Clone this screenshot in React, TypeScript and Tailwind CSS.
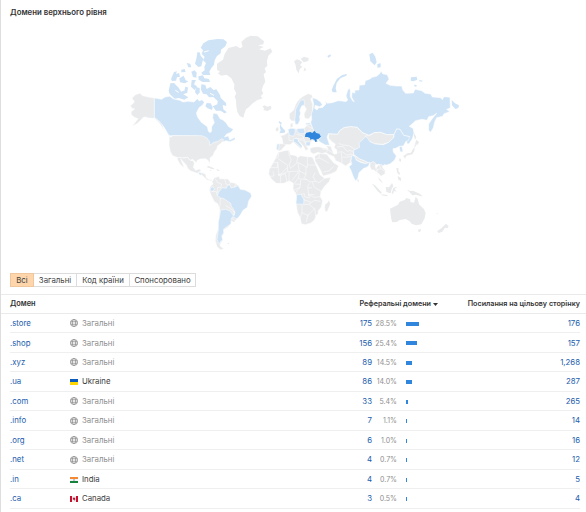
import { clsx } from 'clsx';

type Row = {
  domain: string;
  label: string;
  flag?: 'ua' | 'in' | 'ca';
  refs: number;
  percent: string;
  bar: number;
  links: string;
};

const rows: Row[] = [
  { domain: '.store', label: 'Загальні', refs: 175, percent: '28.5%', bar: 12.7, links: '176' },
  { domain: '.shop', label: 'Загальні', refs: 156, percent: '25.4%', bar: 11.3, links: '157' },
  { domain: '.xyz', label: 'Загальні', refs: 89, percent: '14.5%', bar: 6.3, links: '1,268' },
  { domain: '.ua', label: 'Ukraine', flag: 'ua', refs: 86, percent: '14.0%', bar: 6.2, links: '287' },
  { domain: '.com', label: 'Загальні', refs: 33, percent: '5.4%', bar: 2.4, links: '265' },
  { domain: '.info', label: 'Загальні', refs: 7, percent: '1.1%', bar: 0.6, links: '14' },
  { domain: '.org', label: 'Загальні', refs: 6, percent: '1.0%', bar: 0.6, links: '16' },
  { domain: '.net', label: 'Загальні', refs: 4, percent: '0.7%', bar: 0.6, links: '12' },
  { domain: '.in', label: 'India', flag: 'in', refs: 4, percent: '0.7%', bar: 0.6, links: '5' },
  { domain: '.ca', label: 'Canada', flag: 'ca', refs: 3, percent: '0.5%', bar: 0.6, links: '4' },
];

const tabs = [
  { name: 'Всі', width: 'w-[24px]' },
  { name: 'Загальні', width: 'w-[43px]' },
  { name: 'Код країни', width: 'w-[53px]' },
  { name: 'Спонсоровано', width: 'w-[66px]' },
];

const NONE = '#e9eaec';
const SOME = '#cfe3f6';
const MOST = '#2f86dc';

function Globe() {
  return (
    <svg viewBox="0 0 16 16" className="mb-px h-2 w-2 shrink-0" fill="none" stroke="#949494" strokeWidth="1.7">
      <circle cx="8" cy="8" r="7.1" />
      <ellipse cx="8" cy="8" rx="3.4" ry="7.1" />
      <path d="M1 5.5h14M1 10.5h14" />
    </svg>
  );
}

function Flag({ code }: { code: 'ua' | 'in' | 'ca' }) {
  return (
    <svg viewBox="0 0 24 18" className="h-1.5 w-2 shrink-0">
      {code === 'ua' && (
        <>
          <path fill="#0b5bbd" d="M0 0h24v9H0z" />
          <path fill="#ffd500" d="M0 9h24v9H0z" />
        </>
      )}
      {code === 'in' && (
        <>
          <path fill="#f5f5f5" d="M0 0h24v18H0z" />
          <path fill="#f58a32" d="M0 0h24v6H0z" />
          <path fill="#16833a" d="M0 12h24v6H0z" />
          <circle cx="12" cy="9" r="2.2" fill="none" stroke="#4a4a9c" />
        </>
      )}
      {code === 'ca' && (
        <>
          <path fill="#f3f0f0" d="M0 0h24v18H0z" />
          <path fill="#c8102e" d="M0 0h6v18H0zM18 0h6v18h-6zM12 3l1.5 3 2.5-.5-1 3 1.5 1.5-3.5 2v3h-1v-3l-3.5-2L9 8.5l-1-3 2.5.5z" />
        </>
      )}
    </svg>
  );
}

function WorldMap() {
  return (
    <svg viewBox="0 72 1758 708" className="block h-[236px] w-[586px]" strokeLinejoin="round">
      {/* Alaska, Canada and the Arctic islands */}
      <g transform="translate(360 90)" stroke="#fff" strokeWidth="1.5">
        <path fill={NONE} d="M103 204 85 201 68 197 60 190 46 194 36 205 43 214 40 220 31 227 35 234 44 237 33 245 34 254 43 262 54 266 46 277 36 288 51 281 63 270 70 262 76 261 86 264 103 265 116 277 127 292 134 301 123 277 103 262z" />
        <path fill={SOME} d="M103 204 125 208 135 201 149 199 161 207 179 211 189 216 205 214 222 216 232 206 238 213 246 209 253 217 248 225 237 233 229 249 233 262 244 277 262 290 265 304 270 308 275 304 275 290 283 278 278 263 280 249 292 252 300 266 309 270 318 278 326 290 340 298 333 307 320 312 313 321 325 318 329 330 345 322 345 329 330 335 318 332 304 337 292 338 278 350 264 357 267 344 258 333 246 324 230 318 147 317 139 303 131 290 118 274 103 262z" />
        <g fill={SOME} stroke="none">
          <path d="M242 53 250 40 265 31 292 27 311 28 321 37 316 49 303 59 302 70 291 78 284 91 282 104 274 114 268 125 271 135 249 135 244 128 254 121 253 110 258 99 249 91 254 81 245 71 249 61z" />
          <path d="M232 67 239 67 242 77 250 86 247 96 244 109 235 111 225 101 229 86z" />
          <path d="M235 139 249 136 253 145 267 147 270 156 248 156 236 149z" />
          <path d="M151 160 162 159 176 173 182 183 193 182 196 170 204 172 202 188 190 193 205 202 193 209 176 204 164 206 149 192 146 182z" />
          <path d="M153 147 162 126 171 124 168 132 177 129 180 140 171 142 168 152 156 153z" />
          <path d="M178 145 191 137 197 151 205 154 195 160 180 157z" />
          <path d="M200 98 211 102 214 112 205 112z" />
          <path d="M184 119 194 117 197 126 184 127z" />
          <path d="M214 125 224 121 230 128 229 143 219 141z" />
          <path d="M215 150 228 150 222 163 231 169 224 180 213 170z" />
          <path d="M228 171 239 174 239 187 232 196 225 186z" />
          <path d="M244 163 256 165 260 177 271 171 281 180 289 178 300 195 302 203 318 219 319 228 308 225 310 238 321 247 313 250 302 242 288 242 278 229 292 223 293 213 280 201 267 202 260 193 249 191 243 179z" />
          <path d="M260 219 272 220 278 232 276 240 263 235 256 229z" />
        </g>
        <path d="M188 174 185 185M209 154l-5 18M266 62l-14 4M166 181l10 6M270 190l12 6" fill="none" strokeWidth="3" />
      </g>

      {/* USA, Mexico and the Caribbean */}
      <g transform="translate(450 345)" fill={NONE} stroke="#fff" strokeWidth="1.5">
        <path d="M58 62 63 67 67 62 155 62 170 68 179 80 179 91 192 82 204 79 215 71 221 74 213 85 203 92 200 102 193 111 190 120 180 129 180 147 174 136 166 131 151 132 142 136 139 143 128 133 120 136 113 127 97 129 80 127 68 122 61 110 57 91z" />
        <path d="M80 127 97 129 113 127 120 136 130 137 133 145 130 157 137 166 148 162 154 166 148 171 142 175 122 168 113 160 109 150 92 132 98 147 103 158 92 150 85 139z" />
        <path d="M147 171 157 173 167 178 169 189 179 194 185 193 186 198 171 195 159 183 151 178z" />
        <path fill={SOME} d="M147 171 155 176 153 181 146 177z" />
        <path stroke="none" d="M169 156 176 153 189 158 195 163 186 162zM199 162l11 4-8 2zM179 165l6 1-3 2z" />
      </g>

      {/* South America */}
      <g transform="translate(540 420)" fill={NONE} stroke="#fff" strokeWidth="1.5">
        <path d="M96 125 103 113 117 109 119 116 144 117 151 127 167 130 174 138 169 152 165 172 160 196 165 218 170 237 163 247 154 244 153 251 142 263 129 271 131 282 125 293 128 302 120 310 121 319 132 326 121 329 111 320 106 302 107 287 114 266 117 236 119 207 113 191 103 185 93 165 88 151 91 139 99 132z" />
        <path fill={SOME} d="M117 155 127 143 139 145 143 135 150 135 153 144 168 140 174 136 181 148 195 150 212 159 215 169 206 183 202 202 189 211 181 225 171 237 162 232 155 229 165 218 160 207 154 199 152 190 143 184 132 176 122 174 112 166z" />
        <path fill={SOME} d="M122 210 137 208 151 213 157 223 163 224 153 239 153 251 142 259 131 267 131 278 125 288 128 299 120 306 123 313 115 309 111 298 115 270 115 246 119 227z" />
        <path fill={SOME} d="M91 144 99 140 103 147 99 154 91 153z" />
        <path fill="none" d="M106 116 112 127 125 132 122 143 113 142 113 158M96 154l13 1 3 12M121 174l-1 21-3 12M137 197l12 7 11 9 4 11-6 3M153 234l14 9M134 117l4 15 8 3M151 127l-3 8M167 130l-3 12" />
        <path stroke="none" d="M141 311l5-2 3 2-4 1z" />
      </g>

      {/* Greenland, Iceland and Svalbard */}
      <g transform="translate(600 90)" fill={NONE}>
        <path d="M51 101 69 89 74 72 85 54 109 48 120 55 128 50 124 36 138 23 152 17 173 19 192 34 190 43 174 46 191 51 177 58 195 62 212 55 217 65 205 77 201 93 202 108 194 115 198 126 191 133 196 155 190 166 185 181 190 190 182 199 188 205 171 211 158 220 147 231 138 238 133 251 130 263 119 258 112 246 109 229 108 211 104 200 109 190 102 177 103 163 94 145 80 134 64 137 53 130 60 125 51 119z" />
        <path d="M187 230 193 226 202 230 213 227 214 236 203 243 190 240 193 235z" />
        <path d="M282 94 291 88 299 91 307 97 300 105 307 110 299 118 296 130 289 119 287 106zM302 86l10-6 14 4-1 9-14 4zM314 112l5 8-8 4z" />
      </g>

      {/* Europe, Africa, Asia and Oceania share one origin */}
      <g transform="translate(780 120)" fill={NONE} stroke="#fff" strokeWidth="1.5">
        <path d="M106 243 95 243 88 235 88 221 101 210 107 193 116 179 129 169 144 161 155 164 158 171 152 177 158 192 158 212 157 223 146 237 134 235 132 222 139 208 134 198 126 193 122 207 119 223 121 236 117 246 108 254z" />
        <path fill={SOME} d="M121 181 132 179 134 194 125 198 119 211 122 220 118 231 120 240 114 253 106 253 104 239 106 225 107 208 114 195z" />
        <path d="M91 251 98 248 99 261 91 263z" />
        <path fill={SOME} stroke="none" d="M57 243 65 248 63 257 70 266 76 272 74 278 58 280 62 271 59 260 62 252 56 248z" />
        <path d="M48 263 55 260 57 270 51 275 46 270z" />
        <path d="M50 311 69 311 66 294 61 287 72 285 86 276 91 266 97 264 110 267 133 265 142 254 152 250 159 265 162 273 178 283 183 292 168 303 155 302 151 312 150 318 140 319 146 328 137 332 130 318 118 305 111 302 119 316 126 324 122 326 109 315 100 306 90 314 79 314 69 324 65 330 57 333 49 329z" />
        <path fill={SOME} d="M84 268 93 265 106 266 105 279 100 289 88 286zM111 266l22-1 2 16-15 0-9-6zM100 297l9-2 5 2 1 7 12 14-2 6-17-15-8-5zM138 306l14-1-3 13-12-2zM137 250l13-2 1 5-14 1zM51 312h7l-2 18-6-1z" />
        <path fill="none" d="M68 311l17 5M86 286l2 16 12 0M110 283l14 3 8 6-9 5-18-2M129 294l9 12M135 254l23 12M135 281l17-12M115 300l15 0 8 13" />
        <path fill={SOME} d="M157 173 169 177 182 186 187 194 179 200 165 196 164 205 171 210 176 203 187 203 198 192 196 183 202 190 217 188 234 182 246 183 258 185 263 180 258 168 263 151 268 144 271 152 271 170 278 183 283 185 275 172 276 157 285 159 284 151 297 150 298 136 314 134 316 122 330 117 337 112 350 109 359 101 363 94 369 102 382 104 387 118 378 130 390 136 409 138 425 138 429 151 437 160 460 159 465 148 485 152 495 160 512 162 517 171 542 173 547 179 552 170 570 172 571 204 560 208 569 215 552 221 548 229 530 233 524 246 520 263 512 277 506 271 506 252 516 237 525 226 530 220 519 227 506 230 501 241 486 238 467 242 457 251 448 259 459 265 462 279 457 296 447 311 442 312 439 302 449 290 431 286 420 268 410 267 402 284 380 284 362 277 343 278 326 286 308 278 292 262 271 260 252 263 239 272 233 283 205 281 201 292 209 316 196 315 180 306 173 299 183 292 177 282 163 277 157 262 152 248 155 238 154 222 159 207 161 193z" />
        <path fill={MOST} stroke="none" d="M139 278 151 276 157 279 163 272 169 279 178 281 183 290 176 296 168 299 173 304 166 306 163 299 156 297 151 300 150 294 143 291 135 291 136 283z" />
        <g fill={SOME} stroke="none">
          <path d="M218 157 215 149 221 135 231 116 247 105 261 102 259 107 241 115 230 129 227 145 230 157z" />
          <path d="M202 48 211 43 213 48 205 53zM328 43l10-5 8 12 4 17-6 9-13-12zM352 72l10-2v12l-10 1zM453 112l17-2 2 9-12 5-8-2zM478 120l10 2-2 3-8-1zM463 134l7 1-1 5-6-1zM575 180l10 10 12 6-2 8-9 3-10-11z" />
        </g>

        <path d="M206 282 233 283 239 272 252 263 271 260 291 262 308 279 326 285 332 292 348 307 351 322 342 334 324 345 306 344 296 352 299 359 288 370 276 373 270 368 257 378 244 369 227 362 222 350 205 343 200 339 184 341 175 337 160 342 151 336 150 325 162 321 177 320 190 324 204 326 198 317 213 319 216 329 222 342 231 341 230 329 222 323 226 312 216 305 206 295z" />
        <path fill="none" d="M236 310l13 5 18 2 18 11 18-3 16-11 12-15M231 321l18-2 12 15 10-3 13 8 17-2M233 337l13-2 15 11 11-4 10 5M244 338l2 29M276 349l-18 3-11-1M276 349l17-10 12-2M186 327l18 2 20 14M186 341l14-5 4-8M285 328l-4 12 17-1M270 370l4-16" />
        <path d="M164 349 179 340 201 343 209 354 222 369 236 377 229 394 214 401 189 408 183 393 174 377 165 363z" />
        <path fill="none" d="M166 357l12-3 12 6 16 9M190 396l18-4 13-13M179 340l-2 14" />

        <path d="M316 288 330 286 343 278 362 277 380 284 402 284 401 293 386 307 369 313 345 311 331 306 320 296z" />
        <path fill={SOME} d="M318 289 331 306 346 312 370 314 386 307 402 292 402 284 410 267 420 268 431 286 449 290 445 302 438 304 430 318 418 319 407 325 399 326 400 336 409 348 404 360 391 371 380 375 373 374 368 378 356 373 346 374 339 370 326 369 314 363 299 357 281 344 281 331 299 322 297 309z" />
        <path d="M281 344 299 357 314 363 326 369 324 374 304 367 290 360z" />
        <path fill={SOME} d="M276 345 285 350 289 361 304 368 318 371 329 366 326 378 317 383 311 385 297 398 292 420 286 422 279 408 273 391 267 380 276 372 273 362z" />
        <path d="M290 417l6 1 2 7-5 1z" />
        <path d="M330 371 339 364 347 370 346 382 354 390 349 397 342 390 334 389 330 380zM347 386l8-11 11-1 2 9 8 9-1 9-12 8-8-9-1 10 12 13 3 8-13-12-3-19z" />
        <path fill="none" d="M351 389l12-3 12 9M357 374l6 12" />
        <path fill={SOME} d="M418 319l8 1 3 15-8 1-2-9z" />
        <g stroke="none">
          <path d="M336 431 345 436 365 457 363 462 353 454zM365 463l18 2-2 4-16-3zM377 441l10 1 9-13 4 9-5 9-3 13-13-4zM400 443l13-3-9 7 6 8-8-2-3 9-4-2zM409 384l7 1-1 8 6 8-4 3-6-7zM413 408l10 6 0 9-8-4zM440 449l12 4 7-1 20 9 9 8-5 0-15-5-11 2-11-12z" />
          <path d="M464 313l6 1-6 9-1 10-6 10-18 4-4 9-5-8 12-8 11-2 6-11 5-6zM469 299l8 7-4 8-8-2zM462 278l7 14-4 7-3-11zM419 353l5 6-3 8-4-6z" />
          <path d="M390 506 414 494 419 485 434 480 439 474 451 478 451 486 462 488 467 470 473 477 477 493 491 506 497 519 494 535 484 553 468 556 455 551 449 544 437 537 419 540 410 546 397 547 394 538 392 524zM474 569l9-2-2 8-5 1zM558 551l8 8-4 6-7-2-8 12-12 4-3-6 12-8zM527 518l8 3-2 2z" />
        </g>

        <path d="M55 337 73 332 88 330 91 344 108 347 113 353 121 347 140 350 157 351 161 359 171 382 180 404 194 415 212 412 208 424 193 440 183 455 181 470 188 482 184 501 175 512 174 523 169 525 164 539 153 549 136 554 124 551 121 535 112 516 108 491 112 477 107 461 99 447 100 430 89 423 71 430 49 430 35 418 26 403 28 388 39 369 48 351z" />
        <path fill={SOME} d="M110 464 123 463 127 471 132 478 131 493 108 492z" />
        <path d="M207 480 202 488 195 493 194 501 195 513 201 516 208 500 211 491z" />
        <path fill="none" d="M56 339l-1 12-15 9M41 367h12v16H28M54 356l29 20M53 367l4 39 25-23M83 376l-1 20-28 10M85 330l3 17 6 12M94 359l-6 15 3 11 22-18 30 16M113 353l-3 14M142 350v30l-4 0v24M142 375h28M84 395l34-2 20 10M114 369l4 24-6 8M39 394l3 14-12 1M54 403l8 4 0 21M62 407l14-6 5 26M87 396l0 28M114 398l-18 24M118 398l-3 16-12 16M115 416l25 3M138 404l-6 9 18 13 17-2M165 398l-6 12 8 14 10 4 20-15M104 432l18 1M122 420l-2 23-17 6M120 441l-16 20M123 463l10-2 0 9 15 4-2-10M148 430l-5 10 3 24 18 0M157 427l6 15 20 11M143 444l13-1M144 464l19 8 20-2M132 493l14 0 17-12 18 3M130 478l6 3 16 5M126 494l0 24-7 19M126 518l18 8 19-19-15-14M144 524l-5 22M164 503l3 25" />
      </g>
    </svg>
  );
}

export default function App() {
  return (
    <div className="h-[512px] w-[586px] overflow-hidden border-l border-[#dedede] bg-white font-['Inter','Liberation_Sans',sans-serif] text-[7.8px] text-[#404040]">
      <h2 className="h-6 pt-[6px] pl-[9px] text-[7.8px] leading-3 font-semibold text-[#333]">
        Домени верхнього рівня
      </h2>
      <div className="-ml-px h-[248px]">
        <WorldMap />
      </div>

      <div className="flex h-[22px] pt-px pl-[9px]">
        <div className="flex h-[14px]">
          {tabs.map((tab, i) => (
            <button
              key={tab.name}
              className={clsx(
                'flex items-center justify-center border-y border-r pt-px leading-none whitespace-nowrap',
                tab.width,
                i === 0 ? 'border-l border-[#f0c69c] bg-[#ffd5ab]' : 'border-[#dcdcdc]'
              )}
            >
              {tab.name}
            </button>
          ))}
        </div>
      </div>

      <div className="flex h-5 items-baseline border-y border-[#eaeaea] pt-[3px] pr-[6px] pl-[9px] text-[7.2px] leading-3 font-semibold text-[#333]">
        <span className="w-[200px] text-[7.4px]">Домен</span>
        <span className="flex w-[228px] items-center justify-end gap-[2px]">
          Реферальні домени
          <svg viewBox="0 0 10 6" className="h-[3px] w-[5px]">
            <path d="M0 0h10L5 6z" fill="#333" />
          </svg>
        </span>
        <span className="flex-1 text-right">Посилання на цільову сторінку</span>
      </div>

      <div className="pr-[6px] pl-[9px]">
        {rows.map((row) => (
          <div key={row.domain} className="flex h-[19.47px] items-center border-b border-[#efefef] pt-[1.4px]">
            <span className="w-[60px] text-[#1c5cac]">{row.domain}</span>
            <span className="flex w-[200px] items-center gap-1">
              {row.flag ? <Flag code={row.flag} /> : <Globe />}
              <span className={row.flag ? 'text-[#404040]' : 'text-[#8e8e8e]'}>{row.label}</span>
            </span>
            <span className="flex w-[127px] items-baseline justify-end">
              <span className="text-[#1c5cac]">{row.refs}</span>
              <span className="w-[25px] text-right text-[7px] text-[#8e8e8e]">{row.percent}</span>
            </span>
            <span className="ml-[9px] w-[60px]">
              <span className="block h-1 bg-[#2f86dc]" style={{ width: row.bar }} />
            </span>
            <span className="flex-1 text-right text-[#1c5cac]">{row.links}</span>
          </div>
        ))}
      </div>
    </div>
  );
}
